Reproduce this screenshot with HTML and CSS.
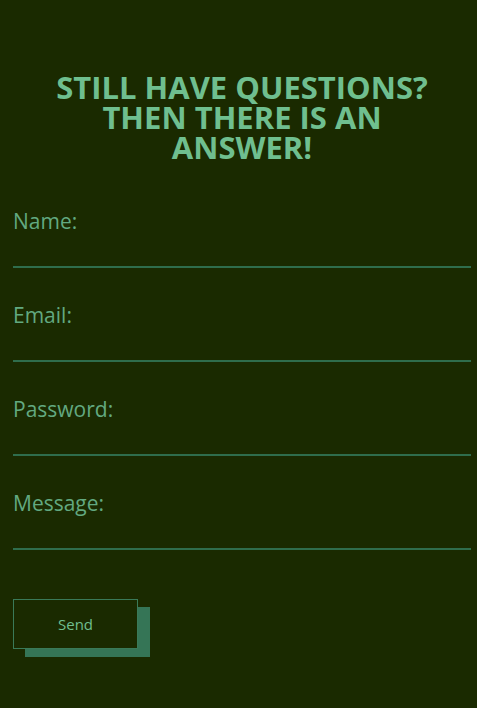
FILE: index.html
```html
<!DOCTYPE html>
<html>
<head>
<meta charset="utf-8">
<link rel="stylesheet" href="styles.css">
</head>
<body>
<div class="page">
  <h1 class="title">STILL HAVE QUESTIONS? THEN THERE IS AN ANSWER!</h1>
  <form class="form">
    <div class="field">
      <label class="label">Name:</label>
      <input class="input" type="text">
    </div>
    <div class="field">
      <label class="label">Email:</label>
      <input class="input" type="email">
    </div>
    <div class="field">
      <label class="label">Password:</label>
      <input class="input" type="password">
    </div>
    <div class="field">
      <label class="label">Message:</label>
      <input class="input" type="text">
    </div>
    <div class="actions">
      <button class="send" type="button">Send</button>
    </div>
  </form>
</div>
</body>
</html>
```

FILE: styles.css
```css
html, body {
  margin: 0;
  padding: 0;
  background: #1a2a00;
}
body {
  font-family: "Open Sans", "Noto Sans", sans-serif;
  width: 477px;
  height: 708px;
  overflow: hidden;
}
.page {
  padding: 72px 6px 0 13px;
}
.title {
  margin: 0 auto;
  width: 420px;
  text-align: center;
  font-size: 31px;
  line-height: 30px;
  font-weight: 700;
  color: #6fbf8f;
}
.form {
  margin-top: 45px;
  display: flex;
  flex-direction: column;
  gap: 33px;
}
.field {
  display: flex;
  flex-direction: column;
}
.label {
  font-size: 21px;
  line-height: 28px;
  color: #62a980;
}
.input {
  height: 31px;
  box-sizing: content-box;
  padding: 0;
  margin: 0;
  border: none;
  border-bottom: 2px solid #2f6d4c;
  background: transparent;
  outline: none;
  color: #6fbf8f;
  font-family: inherit;
  font-size: 18px;
}
.actions {
  margin-top: 16px;
}
.send {
  width: 125px;
  height: 50px;
  background: #1a2a00;
  border: 1px solid #3a7a58;
  box-shadow: 12px 8px 0 #357556;
  color: #6fbf8f;
  font-family: inherit;
  font-size: 15px;
  padding: 0;
  cursor: pointer;
}
```
